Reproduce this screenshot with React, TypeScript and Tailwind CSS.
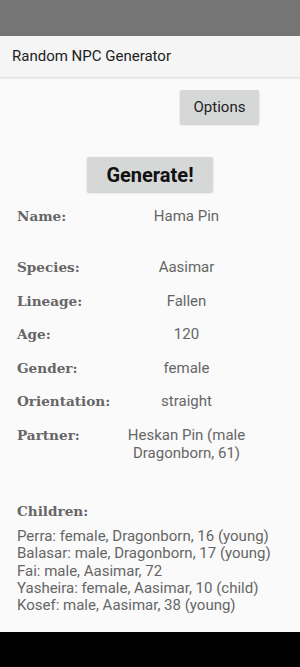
import React from 'react'

const rows: { label: string; value: string[]; mt: string }[] = [
  { label: 'Name:', value: ['Hama Pin'], mt: 'mt-0' },
  { label: 'Species:', value: ['Aasimar'], mt: 'mt-[33px]' },
  { label: 'Lineage:', value: ['Fallen'], mt: 'mt-[15.6px]' },
  { label: 'Age:', value: ['120'], mt: 'mt-[15.6px]' },
  { label: 'Gender:', value: ['female'], mt: 'mt-[15.6px]' },
  { label: 'Orientation:', value: ['straight'], mt: 'mt-[15.6px]' },
  { label: 'Partner:', value: ['Heskan Pin (male', 'Dragonborn, 61)'], mt: 'mt-[15.6px]' },
]

const children = [
  'Perra: female, Dragonborn, 16 (young)',
  'Balasar: male, Dragonborn, 17 (young)',
  'Fai: male, Aasimar, 72',
  'Yasheira: female, Aasimar, 10 (child)',
  'Kosef: male, Aasimar, 38 (young)',
]

const serif = { fontFamily: '"DejaVu Serif", serif' }

export default function App() {
  return (
    <div className="h-[667px] w-[300px] flex flex-col bg-[#fafafa] overflow-hidden" style={{ fontFamily: 'Roboto, sans-serif' }}>
      {/* status bar */}
      <div className="h-[36px] bg-[#757575]" />

      {/* app bar */}
      <div className="h-[41px] bg-[#f5f5f5] flex items-center px-3 shadow-[0_1px_2px_rgba(0,0,0,0.15)] z-10">
        <span className="text-[15px] text-[#212121]">Random NPC Generator</span>
      </div>

      <div className="flex-1 flex flex-col">
        <div className="flex justify-end pr-[41px] pt-[13px]">
          <button className="w-[79px] h-[34px] bg-[#d6d7d7] rounded-[2px] shadow-[0_1px_2px_rgba(0,0,0,0.2)] text-[15px] text-[#222]">
            Options
          </button>
        </div>

        <div className="flex justify-center pt-[33px]">
          <button className="w-[126px] h-[35px] bg-[#d6d7d7] rounded-[2px] shadow-[0_1px_2px_rgba(0,0,0,0.2)] text-[20px] font-bold text-[#111]">
            Generate!
          </button>
        </div>

        <div className="px-[17px] pt-[15px]">
          {rows.map((r) => (
            <div key={r.label} className={`flex ${r.mt}`}>
              <div className="w-[95px] shrink-0 text-[13.6px] font-bold text-[#666] leading-[18px]" style={serif}>
                {r.label}
              </div>
              <div className="flex-1 pr-[22px] text-center text-[15px] text-[#666] leading-[18px]">
                {r.value.map((v) => (
                  <div key={v}>{v}</div>
                ))}
              </div>
            </div>
          ))}

          <div className="mt-[40px] text-[13.6px] font-bold text-[#666] leading-[18px]" style={serif}>
            Children:
          </div>
          <div className="mt-[8px] text-[15px] text-[#666] leading-[17.3px]">
            {children.map((c) => (
              <div key={c}>{c}</div>
            ))}
          </div>
        </div>
      </div>

      {/* nav bar */}
      <div className="h-[35px] bg-black" />
    </div>
  )
}
